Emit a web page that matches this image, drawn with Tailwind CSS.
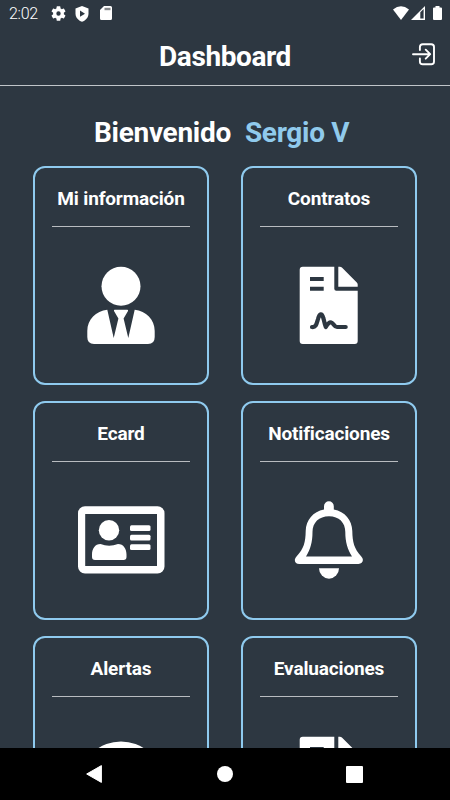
<!DOCTYPE html>
<html lang="es">
<head>
  <meta charset="UTF-8" />
  <meta name="viewport" content="width=device-width, initial-scale=1.0" />
  <title>Dashboard</title>
  <script src="https://cdn.jsdelivr.net/npm/@tailwindcss/browser@4"></script>
</head>
<body class="bg-[#2d3741] text-white font-['Roboto',sans-serif] h-[800px] overflow-hidden flex flex-col">
  <!-- Shared document icon -->
  <svg class="hidden">
    <symbol id="doc" viewBox="0 0 90 90">
      <path fill="#fff" d="M18.7 6.7H50.3V28.7a2 2 0 0 0 2 2H73.7V81a3 3 0 0 1-3 3H18.7a3 3 0 0 1-3-3V9.7a3 3 0 0 1 3-3z" />
      <path fill="#fff" d="M54.3 6.7h1.6q1.2 0 2 .8L72.8 22.4q.9.9.9 2.2v2.1H54.3z" />
      <path fill="#2d3741" d="M26 17h13.7v4H26zM26 26.7h13.7v4H26z" />
    </symbol>
  </svg>

  <!-- Status bar -->
  <div class="h-7 shrink-0 flex items-center justify-between pl-[9px] pr-2">
    <div class="flex items-center">
      <span class="text-base leading-7 tracking-[-0.3px] font-light w-[42px]">2:02</span>
      <svg class="w-[15px] h-[15px] mt-[-2px]" viewBox="2 2 20 20" fill="#fff"><path d="M19.14 12.94c.04-.3.06-.61.06-.94s-.02-.64-.07-.94l2.03-1.58a.49.49 0 0 0 .12-.61l-1.92-3.32a.49.49 0 0 0-.59-.22l-2.39.96a7 7 0 0 0-1.62-.94l-.36-2.54A.48.48 0 0 0 13.92 2.4h-3.84a.48.48 0 0 0-.48.41l-.36 2.54a7 7 0 0 0-1.62.94l-2.39-.96a.48.48 0 0 0-.59.22L2.72 8.87a.48.48 0 0 0 .12.61l2.03 1.58a6 6 0 0 0 0 1.88l-2.03 1.58a.49.49 0 0 0-.12.61l1.92 3.32c.12.22.37.29.59.22l2.39-.96c.5.38 1.03.7 1.62.94l.36 2.54c.05.24.24.41.48.41h3.84c.24 0 .44-.17.47-.41l.36-2.54a7 7 0 0 0 1.62-.94l2.39.96c.22.08.47 0 .59-.22l1.92-3.32a.48.48 0 0 0-.12-.61zM12 14.9a2.9 2.9 0 1 1 0-5.8 2.9 2.9 0 0 1 0 5.8z" /></svg>
      <svg class="w-[14px] h-4 ml-[9px] mt-[-1px]" viewBox="0 0 14 16"><path fill="#fff" d="M7 0l6.5 2.6v4.8c0 3.8-2.6 7-6.5 8.300C3.1 14.4.5 11.2.5 7.4V2.6z" /><path fill="#2d3741" d="M5 4.6v6.2l5-3.1z" /></svg>
      <svg class="w-3 h-[14px] ml-[11px] mt-[-2px]" viewBox="0 0 12 14"><path fill="#fff" d="M4 0h6.500A1.500 1.500 0 0 1 12 1.500v11A1.500 1.500 0 0 1 10.500 14h-9A1.500 1.500 0 0 1 0 12.500V4z" /><path fill="#85888b" d="M4.500 1.800h6v2.400h-6z" /></svg>
    </div>
    <div class="flex items-center mt-[-2px]">
      <svg class="w-4 h-[14px]" viewBox="0 0 16 14"><path fill="#fff" d="M0 3.500Q8-3 16 3.500L8 14z" /></svg>
      <svg class="w-[14px] h-[14px] ml-[2px]" viewBox="0 0 14 14"><path fill="#fff" d="M14 0v14H0z" /><path fill="#2d3741" d="M9.300 6.200L12.600 2.900V12.600H9.300z" /></svg>
      <svg class="w-[9px] h-[14px] ml-2" viewBox="0 0 9 14"><path fill="#fff" d="M2.500 0h4v1.400H8a1 1 0 0 1 1 1V13a1 1 0 0 1-1 1H1a1 1 0 0 1-1-1V2.400a1 1 0 0 1 1-1h1.500z" /></svg>
    </div>
  </div>

  <!-- Header -->
  <header class="relative h-[58px] shrink-0 border-b border-[#c0c5c9] flex justify-center">
    <h1 class="text-[28px] leading-[58px] tracking-[-0.4px] font-bold">Dashboard</h1>
    <a href="#" class="absolute top-[14px] right-[14px]">
      <svg class="w-[25px] h-[25px]" viewBox="0 0 25 25" fill="none" stroke="#fff" stroke-width="1.9" stroke-linecap="round" stroke-linejoin="round"><path d="M8.900 8V5Q8.900 2.200 11.700 2.200H20.200Q23 2.200 23 5V19.500Q23 22.300 20.200 22.300H11.700Q8.900 22.300 8.900 19.500V16.500M2 12.200H19M14.700 7.700L19.200 12.200L14.700 16.700" /></svg>
    </a>
  </header>

  <main class="flex-1 min-h-0 overflow-hidden">
    <h2 class="h-20 pl-[94px] pt-[26px] text-[28px] leading-[42px] tracking-[-0.3px] font-bold flex gap-[14px]">
      <span>Bienvenido</span>
      <span class="text-[#90caec]">Sergio V</span>
    </h2>

    <div class="grid grid-cols-[176px_176px] gap-x-8 gap-y-4 pl-[33px]">
      <div class="h-[219px] border-2 border-[#8fcaee] rounded-[12px] flex flex-col items-center">
        <h3 class="h-[58px] text-[19px] leading-[61px] tracking-[-0.15px] font-bold">Mi información</h3>
        <div class="w-[138px] h-px bg-[#b9bcc0]"></div>
        <svg class="w-[90px] h-[90px] mt-[33px]" viewBox="0 0 90 90" fill="#fff">
          <circle cx="45" cy="26.3" r="19.5" />
          <path d="M31.3 49.7L37.7 78L42.4 58.5L38 50.9Q37.6 49.7 38.8 49.7H51.2Q52.4 49.7 52 50.9L47.6 58.5L52.3 78L58.7 49.7C70 50.7 78.700 59.5 78.700 71V77Q78.700 84 72 84H18Q11.300 84 11.300 77V71C11.300 59.5 20 50.7 31.3 49.7z" />
        </svg>
      </div>

      <div class="h-[219px] border-2 border-[#8fcaee] rounded-[12px] flex flex-col items-center">
        <h3 class="h-[58px] text-[19px] leading-[61px] tracking-[-0.15px] font-bold">Contratos</h3>
        <div class="w-[138px] h-px bg-[#b9bcc0]"></div>
        <svg class="w-[90px] h-[90px] mt-[33px]" viewBox="0 0 90 90">
          <use href="#doc" />
          <path fill="none" stroke="#2d3741" stroke-width="4.2" stroke-linecap="round" stroke-linejoin="round" d="M28 67C32 67.500 32.500 64 34 59C35.500 53 38 53 39.300 58C40.300 61 40.500 64 41.800 67C43.500 64 45 62 47.300 62.500C49.500 63 50 67 53 67H61.700" />
        </svg>
      </div>

      <div class="h-[219px] border-2 border-[#8fcaee] rounded-[12px] flex flex-col items-center">
        <h3 class="h-[58px] text-[19px] leading-[61px] tracking-[-0.15px] font-bold">Ecard</h3>
        <div class="w-[138px] h-px bg-[#b9bcc0]"></div>
        <svg class="w-[90px] h-[90px] mt-[33px]" viewBox="0 0 90 90" fill="#fff">
          <path fill-rule="evenodd" d="M9 11.200H81.500a7 7 0 0 1 7 7V71.500a7 7 0 0 1-7 7H9a7 7 0 0 1-7-7V18.200a7 7 0 0 1 7-7zM9.200 19V71H81V19z" />
          <circle cx="33" cy="35.2" r="10.2" />
          <path d="M24.5 49Q33 52.5 42 49C47.500 49 50.500 54 50.500 59.500V62Q50.500 65 47.500 65H19Q16 65 16 62V59.500C16 54 19 49 24.500 49z" />
          <rect x="54" y="30.2" width="20.500" height="5.800" rx="1.5" />
          <rect x="54" y="39.800" width="20.500" height="5.800" rx="1.5" />
          <rect x="54" y="49.200" width="20.500" height="5.800" rx="1.5" />
        </svg>
      </div>

      <div class="h-[219px] border-2 border-[#8fcaee] rounded-[12px] flex flex-col items-center">
        <h3 class="h-[58px] text-[19px] leading-[61px] tracking-[-0.15px] font-bold">Notificaciones</h3>
        <div class="w-[138px] h-px bg-[#b9bcc0]"></div>
        <svg class="w-[90px] h-[90px] mt-[33px]" viewBox="0 0 90 90" fill="#fff">
          <path fill-rule="evenodd" d="M40 14.500V11.200a4.900 4.900 0 0 1 9.800 0V14.500C61 16.500 68 25 68.300 36C68.500 47 70 53.500 77.300 61.500C80.500 65 78.500 69 74.500 69H15.300C11 69 9.300 65 12.500 61.500C20 53.500 21.500 47 21.700 36C22 25 29 16.500 40 14.500zM45 21.200C35 21.200 28.500 27.500 28.500 37C28.500 47 26.500 54.500 22 61.400H68C63.500 54.500 61.300 47 61.300 37C61.300 27.500 55 21.200 45 21.200z" />
          <path d="M35 73.200H55a10 10.500 0 0 1-20 0z" />
        </svg>
      </div>

      <div class="h-[219px] border-2 border-[#8fcaee] rounded-[12px] flex flex-col items-center">
        <h3 class="h-[58px] text-[19px] leading-[61px] tracking-[-0.15px] font-bold">Alertas</h3>
        <div class="w-[138px] h-px bg-[#b9bcc0]"></div>
        <svg class="w-[90px] h-[90px] mt-[33px]" viewBox="0 0 90 90" fill="#fff">
          <ellipse cx="45" cy="45" rx="38" ry="33.500" />
        </svg>
      </div>

      <div class="h-[219px] border-2 border-[#8fcaee] rounded-[12px] flex flex-col items-center">
        <h3 class="h-[58px] text-[19px] leading-[61px] tracking-[-0.15px] font-bold">Evaluaciones</h3>
        <div class="w-[138px] h-px bg-[#b9bcc0]"></div>
        <svg class="w-[90px] h-[90px] mt-[33px]" viewBox="0 0 90 90">
          <use href="#doc" />
        </svg>
      </div>
    </div>
  </main>

  <!-- Android navigation -->
  <nav class="h-[52px] shrink-0 bg-black flex items-center pl-[86px] gap-[114px]">
    <svg class="w-4 h-[18px]" viewBox="0 0 16 18"><path fill="#fff" stroke="#fff" stroke-linejoin="round" d="M.7 9L15.400.6V17.400z" /></svg>
    <div class="w-4 h-4 ml-px rounded-full bg-white"></div>
    <div class="w-[17px] h-[17px] -ml-px rounded-[1px] bg-white"></div>
  </nav>
</body>
</html>
